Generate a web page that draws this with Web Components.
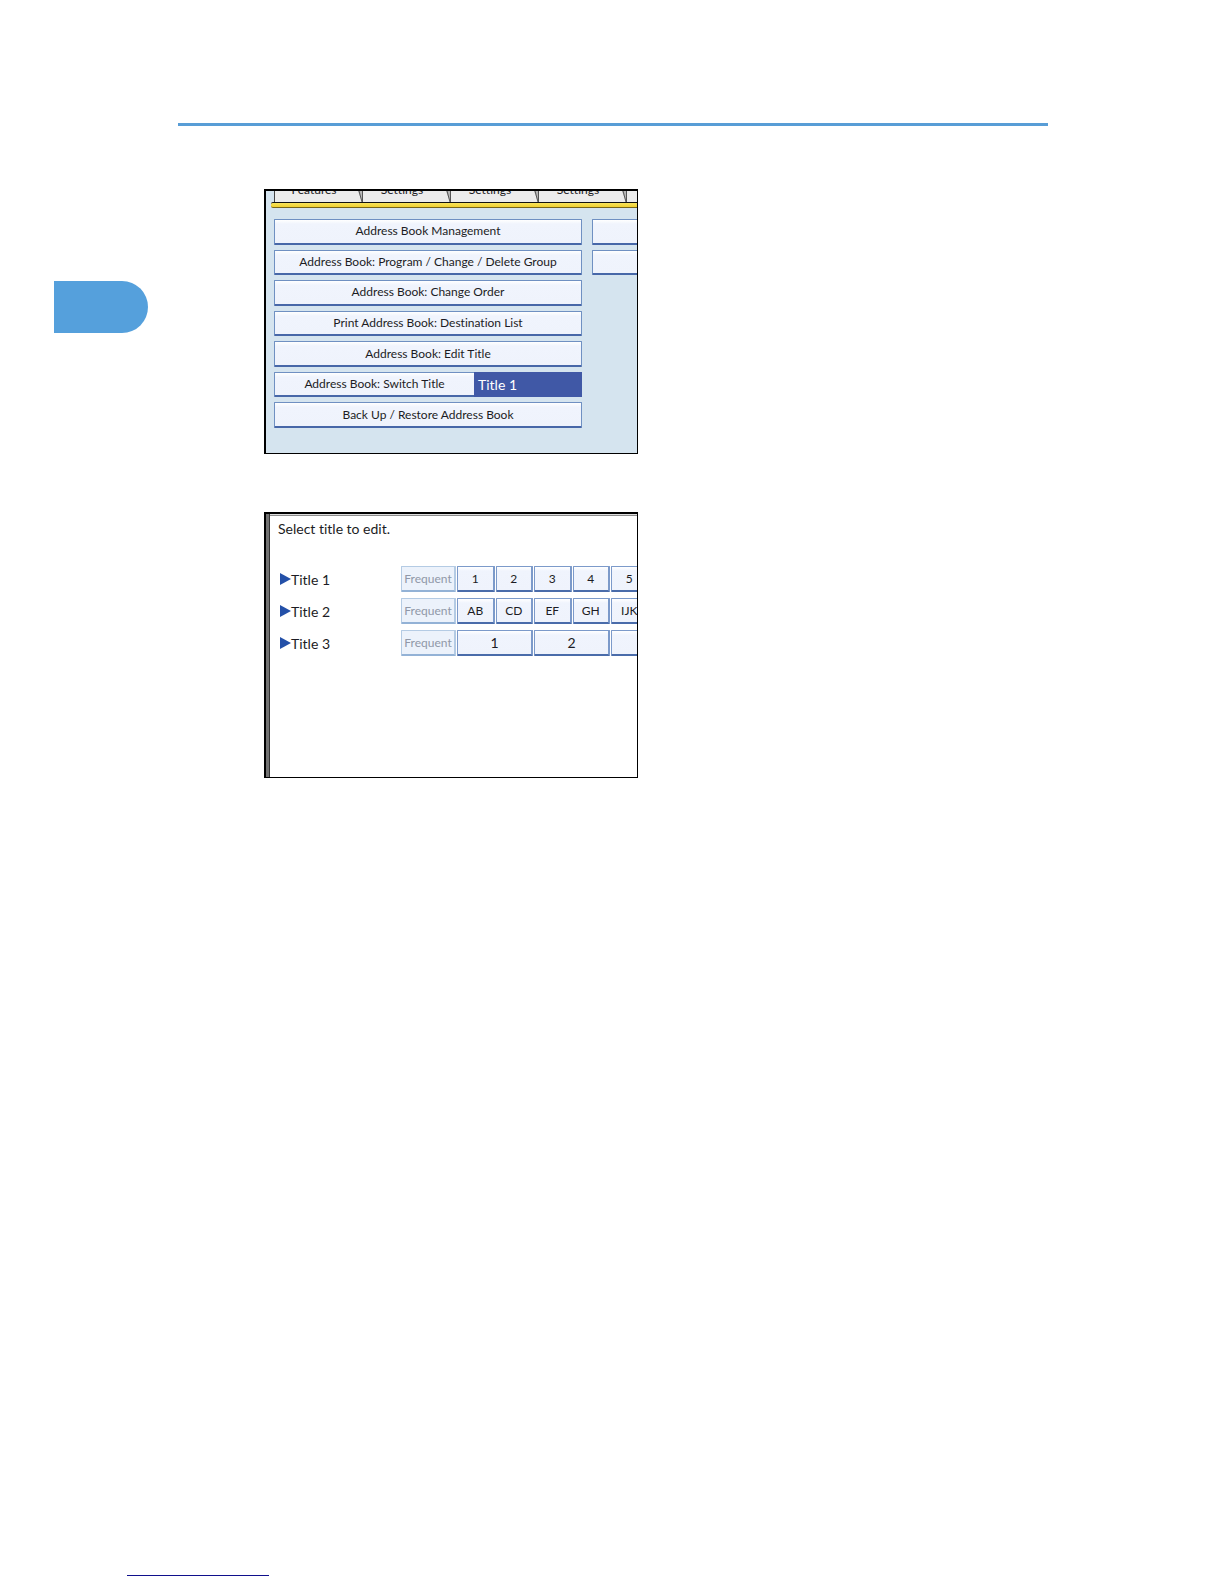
<!DOCTYPE html>
<html lang="en">
<head>
<meta charset="utf-8">
<title>Address Book</title>
<style>
  body{
    margin: 0;
    background: #fff;
    font-family: Lato, "Liberation Sans", sans-serif;
    font-size: 12px;
    font-variant-ligatures: none;
    color: #1c1c24;
  }
</style>
</head>
<body>
<manual-page>
  <panel-frame>
    <tab-strip labels="Features,Settings,Settings,Settings,"></tab-strip>
    <address-menu></address-menu>
  </panel-frame>
  <panel-frame kind="dialog">
    <title-picker></title-picker>
  </panel-frame>
</manual-page>

<script>
customElements.define('manual-page', class extends HTMLElement{
  constructor(){
    super();
    this.shadow = this.attachShadow({mode:'open'});
  }

  connectedCallback(){
    this.shadow.innerHTML = `
      <header></header>
      <main>
        <div class='marker'></div>
        <div class='figures'><slot></slot></div>
      </main>
      <footer></footer>
      <style>
          :host{
            display: flex;
            flex-direction: column;
            min-height: 100vh;
          }

          header{
            margin: 123px 176px 0 178px;
            height: 3px;
            background: #589dd6;
          }

          main{
            display: grid;
            grid-template-columns: 94px minmax(0, 1fr);
            column-gap: 116px;
            align-items: start;
            padding: 63px 54px 0;
            flex: 1;
          }

          .marker{
            margin-top: 92px;
            height: 52px;
            border-radius: 0 26px 26px 0;
            background: #55a0dc;
          }

          .figures{
            display: flex;
            flex-direction: column;
            gap: 58px;
          }

          footer{
            width: 142px;
            margin: 0 0 8px 127px;
            border-bottom: 1px solid #10108c;
          }
      </style>
    `;
  }
})

customElements.define('panel-frame', class extends HTMLElement{
  constructor(){
    super();
    this.shadow = this.attachShadow({mode:'open'});
  }

  connectedCallback(){
    this.shadow.innerHTML = `
      <slot></slot>
      <style>
          :host{
            display: block;
            box-sizing: border-box;
            max-width: 374px;
            min-height: 265px;
            overflow: hidden;
            border: solid #000;
            border-width: 2px 1px 1px 2px;
            background: #d5e4ef;
          }

          :host([kind=dialog]){
            min-height: 266px;
            background: linear-gradient(90deg, #727272 3px, #333 3px 4px, transparent 4px),
              linear-gradient(#ddd 1px, #8c8c8c 1px 2px, #fff 2px);
          }
      </style>
    `;
  }
})

customElements.define('tab-strip', class extends HTMLElement{
  constructor(){
    super();
    this.shadow = this.attachShadow({mode:'open'});
  }

  connectedCallback(){
    const labels = this.getAttribute('labels').split(',');
    this.shadow.innerHTML = `
      <nav>
        ${labels.map(label => `<button>${label}<svg width='5' height='11' viewBox='0 0 5 11'><path d='M0 0L4 11V0z' fill='#b8b8b8'/><path d='M1 0L4 11M4.5 0V11' fill='none' stroke='#555'/></svg></button>`).join('')}
      </nav>
      <div class='bar'></div>
      <style>
          nav{
            display: flex;
            align-items: flex-end;
            height: 11px;
            margin-left: 8px;
            overflow: hidden;
            border-left: 1px solid #444;
          }

          button{
            position: relative;
            flex: 0 0 88px;
            padding: 0 10px 2px 0;
            height: 22px;
            border: 0;
            background: #ececec;
            font: inherit;
            font-variant-ligatures: none;
            line-height: 16px;
            color: inherit;
          }

          svg{
            position: absolute;
            right: 0;
            bottom: 0;
          }

          .bar{
            height: 4px;
            margin-left: 5px;
            border: solid #111;
            border-width: 1px 0;
            border-bottom-color: #75651c;
            background: linear-gradient(#f8e45c, #f0d030);
            border-radius: 2px 0 0 2px;
          }
      </style>
    `;
  }
})

customElements.define('address-menu', class extends HTMLElement{
  constructor(){
    super();
    this.shadow = this.attachShadow({mode:'open'});
  }

  connectedCallback(){
    this.shadow.innerHTML = `
      <div class='list'>
        <button>Address Book Management</button>
        <button>Address Book: Program / Change / Delete Group</button>
        <button>Address Book: Change Order</button>
        <button>Print Address Book: Destination List</button>
        <button>Address Book: Edit Title</button>
        <button class='switch'><span>Address Book: Switch Title</span><span class='value'>Title 1</span></button>
        <button>Back Up / Restore Address Book</button>
      </div>
      <div class='list'>
        <button></button>
        <button></button>
      </div>
      <style>
          :host{
            display: grid;
            grid-template-columns: 308px 308px;
            column-gap: 10px;
            padding: 11px 0 0 8px;
          }

          .list{
            display: grid;
            grid-template-rows: repeat(7, 1fr);
            row-gap: 5px;
            height: 209px;
          }

          button{
            min-height: 0;
            padding: 0;
            border: solid #6f90c2;
            border-width: 1px 1px 2px;
            border-bottom-color: #4767a8;
            border-radius: 1px;
            background: linear-gradient(#fff, #f0f4fd 4px, #eff3fc);
            font: inherit;
            font-variant-ligatures: none;
            line-height: 22px;
            color: inherit;
          }

          .switch{
            display: grid;
            grid-template-columns: 199px 1fr;
          }

          .value{
            margin: -1px -1px -2px 0;
            padding: 2px 4px 0;
            background: #4058a6;
            color: #fff;
            font-size: 14px;
            text-align: left;
          }
      </style>
    `;
  }
})

customElements.define('title-picker', class extends HTMLElement{
  constructor(){
    super();
    this.shadow = this.attachShadow({mode:'open'});
  }

  connectedCallback(){
    const rows = [
      ['Title 1', ['1', '2', '3', '4', '5']],
      ['Title 2', ['AB', 'CD', 'EF', 'GH', 'IJK']],
      ['Title 3', ['1', '2', '']],
    ];
    this.shadow.innerHTML = `
      <p>Select title to edit.</p>
      <div class='rows'>
        ${rows.map(([title, keys]) => `
          <div class='row'>
            <a href='#'><svg width='11' height='12' viewBox='0 0 11 12'><path d='M0 0L11 6L0 12z' fill='#2450a8'/></svg>${title}</a>
            <button disabled>Frequent</button>
            <div class='keys ${keys.length == 3 ? 'wide' : ''}'>${keys.map(key => `<button>${key}</button>`).join('')}</div>
          </div>`).join('')}
      </div>
      <style>
          :host{
            display: block;
            padding: 5px 0 0 12px;
            font-size: 14px;
          }

          p{
            margin: 0 0 27px;
            line-height: 20px;
          }

          .rows{
            display: grid;
            row-gap: 6px;
          }

          .row{
            display: grid;
            grid-template-columns: 120px 55px 384px;
            column-gap: 1px;
            height: 26px;
            padding-left: 2px;
          }

          a{
            display: flex;
            align-items: center;
            color: inherit;
            text-decoration: none;
          }

          .keys{
            display: grid;
            grid-template-columns: repeat(10, 1fr);
            column-gap: 1px;
          }

          .wide button{
            grid-column: span 2;
          }

          button{
            min-width: 0;
            padding: 0;
            border: solid #7c9aca;
            border-width: 1px 2px 2px 1px;
            border-bottom-color: #4a6caa;
            border-radius: 1px;
            background: linear-gradient(#fff, #f0f4fd 4px, #eff3fc);
            font: inherit;
            font-size: 12px;
            color: inherit;
          }

          .wide button{
            font-size: 14px;
          }

          button:disabled{
            border-color: #b4cbe4;
            border-bottom-color: #93b2d6;
            background: #ecf2fb;
            color: #9098a8;
          }
      </style>
    `;
  }
})
</script>
</body>
</html>
